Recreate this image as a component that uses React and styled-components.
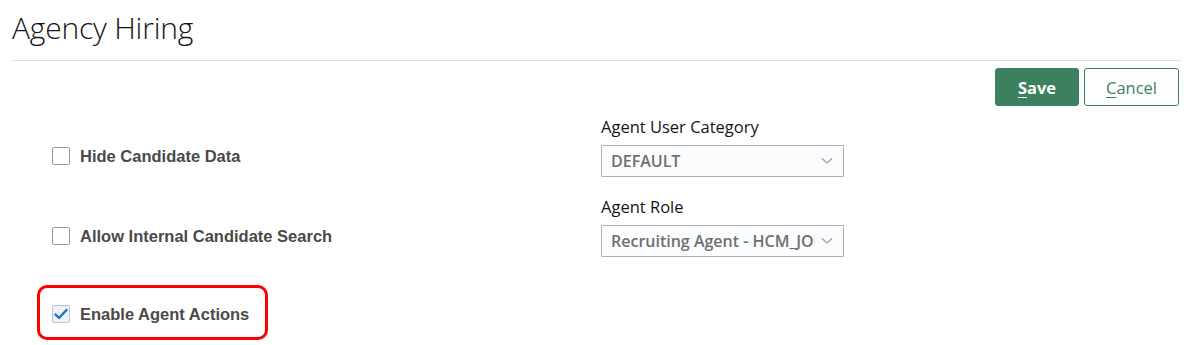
import React from "react";
import styled, { createGlobalStyle } from "styled-components";

const GlobalStyle = createGlobalStyle`
  body {
    margin: 0;
    background: #ffffff;
    font-family: "Open Sans", "Noto Sans", sans-serif;
  }
`;

const Page = styled.div`
  padding: 0 14px 0 12px;
`;

const Header = styled.header`
  height: 61px;
  border-bottom: 1px solid #d7dee5;
  box-sizing: border-box;
  display: flex;
  align-items: flex-start;
`;

const Title = styled.h1`
  margin: 8px 0 0 0;
  font-family: "Open Sans", sans-serif;
  font-weight: 300;
  font-size: 30px;
  line-height: 40px;
  color: #161513;
  letter-spacing: -0.2px;
`;

const Toolbar = styled.div`
  display: flex;
  justify-content: flex-end;
  gap: 5px;
  margin-top: 7px;
  padding-right: 2px;
`;

const Button = styled.button`
  height: 38px;
  min-width: ${({ $width }) => $width}px;
  padding: 0 12px;
  border-radius: 3px;
  border: 1px solid #3d8060;
  background: ${({ $primary }) => ($primary ? "#3d8060" : "#ffffff")};
  color: ${({ $primary }) => ($primary ? "#ffffff" : "#3d8060")};
  font-family: "Open Sans", sans-serif;
  font-weight: ${({ $primary }) => ($primary ? 700 : 400)};
  font-size: 16.5px;
  cursor: pointer;

  u {
    text-underline-offset: 3px;
  }
`;

const Form = styled.div`
  display: grid;
  grid-template-columns: 549px 243px;
  row-gap: 19px;
  padding-left: 40px;
  margin-top: 10px;
`;

const CheckCell = styled.div`
  align-self: end;
  padding-bottom: 11px;
  display: flex;
  align-items: center;
`;

const CheckLabel = styled.label`
  display: flex;
  align-items: center;
  gap: 10px;
  font-family: "Liberation Sans", Arial, sans-serif;
  font-weight: 700;
  font-size: 16.5px;
  line-height: 20px;
  color: #4a4a4a;
`;

const Box = styled.span`
  width: 18px;
  height: 18px;
  box-sizing: border-box;
  border-radius: 2px;
  border: 1px solid ${({ $checked }) => ($checked ? "#b9c3cd" : "#8e99a3")};
  background: ${({ $checked }) => ($checked ? "#eef3f8" : "#ffffff")};
  display: flex;
  align-items: center;
  justify-content: center;
`;

const Field = styled.div`
  display: flex;
  flex-direction: column;
  gap: 7px;
`;

const FieldLabel = styled.div`
  font-family: "Open Sans", sans-serif;
  font-size: 16.5px;
  line-height: 22px;
  color: #161513;
`;

const Select = styled.div`
  height: 32px;
  box-sizing: border-box;
  border: 1px solid #a9b0b6;
  border-radius: 1px;
  background: #fbfcfd;
  display: flex;
  align-items: center;
  padding: 0 10px 0 9px;
  gap: 6px;
`;

const SelectValue = styled.span`
  flex: 1;
  overflow: hidden;
  white-space: nowrap;
  font-family: "Open Sans", sans-serif;
  font-weight: 600;
  font-size: 16px;
  color: #6f6f6f;
`;

const Highlight = styled.div`
  grid-column: 1 / -1;
  width: 231px;
  height: 55px;
  box-sizing: border-box;
  margin: 9px 0 0 -15px;
  border: 3px solid #ff0000;
  border-radius: 10px;
  display: flex;
  align-items: center;
  padding: 3px 0 0 12px;
`;

function Checkbox({ checked, children }) {
  return (
    <CheckLabel>
      <Box $checked={checked}>
        {checked && (
          <svg width="14" height="12" viewBox="0 0 14 12">
            <path d="M1.5 6.5 L5 10 L12.5 2" fill="none" stroke="#1b72c5" strokeWidth="2.4" strokeLinecap="round" strokeLinejoin="round" />
          </svg>
        )}
      </Box>
      {children}
    </CheckLabel>
  );
}

function Chevron() {
  return (
    <svg width="12" height="8" viewBox="0 0 12 8">
      <path d="M1 1.5 L6 6 L11 1.5" fill="none" stroke="#9aa1a7" strokeWidth="1.3" />
    </svg>
  );
}

function SelectField({ label, value }) {
  return (
    <Field>
      <FieldLabel>{label}</FieldLabel>
      <Select>
        <SelectValue>{value}</SelectValue>
        <Chevron />
      </Select>
    </Field>
  );
}

export default function App() {
  return (
    <Page>
      <GlobalStyle />
      <Header>
        <Title>Agency Hiring</Title>
      </Header>
      <Toolbar>
        <Button $primary $width={84}>
          <u>S</u>ave
        </Button>
        <Button $width={95}>
          <u>C</u>ancel
        </Button>
      </Toolbar>
      <Form>
        <CheckCell>
          <Checkbox>Hide Candidate Data</Checkbox>
        </CheckCell>
        <SelectField label="Agent User Category" value="DEFAULT" />
        <CheckCell>
          <Checkbox>Allow Internal Candidate Search</Checkbox>
        </CheckCell>
        <SelectField label="Agent Role" value="Recruiting Agent - HCM_JOB" />
        <Highlight>
          <Checkbox checked>Enable Agent Actions</Checkbox>
        </Highlight>
      </Form>
    </Page>
  );
}
